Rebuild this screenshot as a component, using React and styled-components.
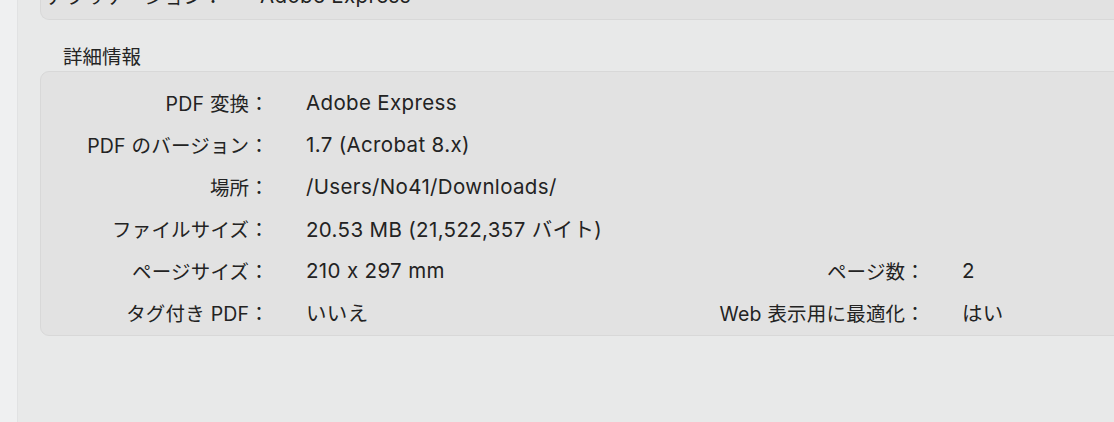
import React from 'react';
import styled, { createGlobalStyle } from 'styled-components';

const GlobalStyle = createGlobalStyle`
  html, body {
    margin: 0;
    padding: 0;
    background: #e8e9e9;
    overflow: hidden;
  }
  body {
    font-family: "Inter", "Noto Sans CJK JP", sans-serif;
    font-feature-settings: "calt" 0;
    color: #232323;
  }
`;

const Page = styled.div`
  display: flex;
  width: 1114px;
  height: 422px;
  overflow: hidden;
`;

const Sidebar = styled.div`
  width: 17px;
  flex-shrink: 0;
  background: #eff0f1;
  border-right: 1px solid #e1e2e3;
`;

const Main = styled.main`
  flex: 1;
  padding-left: 22px;
  margin-right: -20px;
  display: flex;
  flex-direction: column;
`;

const Card = styled.section`
  background: #e2e2e2;
  border: 1px solid #d8d8d8;
  border-radius: 9px;
  display: grid;
  grid-template-columns: ${(p) => p.$cols};
  grid-auto-rows: 42px;
  column-gap: 37px;
  align-items: center;
  padding: ${(p) => p.$pad};
`;

const TopCard = styled(Card)`
  margin-top: -26px;
  border-top: none;
  border-radius: 0 0 9px 9px;
`;

const SectionTitle = styled.h2`
  margin: 25px 0 2px 23px;
  font-size: 19.5px;
  font-weight: 400;
  line-height: 24px;
  color: #242424;
`;

const Label = styled.div`
  text-align: right;
  white-space: nowrap;
  font-size: 19.5px;
  letter-spacing: 0.2px;
`;

const Value = styled.div`
  white-space: nowrap;
  font-size: 20.5px;
  letter-spacing: 0.35px;
`;

const details = [
  ['PDF 変換：', 'Adobe Express'],
  ['PDF のバージョン：', '1.7 (Acrobat 8.x)'],
  ['場所：', '/Users/No41/Downloads/'],
  ['ファイルサイズ：', '20.53 MB (21,522,357 バイト)'],
  ['ページサイズ：', '210 x 297 mm', 'ページ数：', '2'],
  ['タグ付き PDF：', 'いいえ', 'Web 表示用に最適化：', 'はい'],
];

const App = () => {
  return (
    <Page>
      <GlobalStyle />
      <Sidebar />
      <Main>
        <TopCard $cols="182px 1fr" $pad="0 0 3px 0">
          <Label>アプリケーション：</Label>
          <Value>Adobe Express</Value>
        </TopCard>
        <SectionTitle>詳細情報</SectionTitle>
        <Card $cols="228px 1fr auto 171px" $pad="9px 0 2px 0">
          {details.map((row, i) => (
            <React.Fragment key={i}>
              <Label>{row[0]}</Label>
              <Value>{row[1]}</Value>
              <Label>{row[2] || ''}</Label>
              <Value>{row[3] || ''}</Value>
            </React.Fragment>
          ))}
        </Card>
      </Main>
    </Page>
  );
};

export default App;
